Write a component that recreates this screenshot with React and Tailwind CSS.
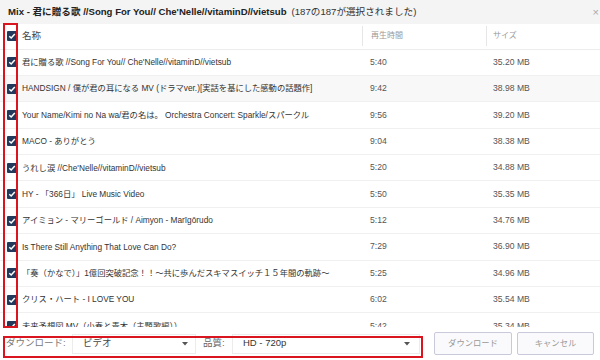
import React from "react";

const rows = [
  ["君に贈る歌 //Song For You// Che'Nelle//vitaminD//vietsub", "5:40", "35.20 MB"],
  ["HANDSIGN / 僕が君の耳になる MV (ドラマver.)[実話を基にした感動の話題作]", "9:42", "38.98 MB"],
  ["Your Name/Kimi no Na wa/君の名は。 Orchestra Concert: Sparkle/スパークル", "9:56", "39.20 MB"],
  ["MACO - ありがとう", "9:04", "38.38 MB"],
  ["うれし涙 //Che'Nelle//vitaminD//vietsub", "5:20", "34.88 MB"],
  ["HY - 「366日」 Live Music Video", "5:50", "35.35 MB"],
  ["アイミョン - マリーゴールド / Aimyon - Marīgōrudo", "5:12", "34.76 MB"],
  ["Is There Still Anything That Love Can Do?", "7:29", "36.90 MB"],
  ["「奏（かなで）」1億回突破記念！！～共に歩んだスキマスイッチ１５年間の軌跡～", "5:25", "34.96 MB"],
  ["クリス・ハート - I LOVE YOU", "6:02", "35.54 MB"],
  ["未来予想図 MV（小春と青木（主題歌編））", "5:42", "35.34 MB"],
];

function Check() {
  return (
    <span className="flex h-[10px] w-[10px] items-center justify-center rounded-[1px] bg-[#22395c]">
      <svg width="8" height="8" viewBox="0 0 8 8">
        <path d="M1.3 4.2 L3.2 6 L6.8 2" fill="none" stroke="#fff" strokeWidth="1.5" />
      </svg>
    </span>
  );
}

function Caret() {
  return (
    <svg width="6" height="4" viewBox="0 0 6 4">
      <path d="M0 0 L6 0 L3 3.5 Z" fill="#555" />
    </svg>
  );
}

export default function App() {
  return (
    <div
      className="relative flex h-[360px] w-[600px] flex-col overflow-hidden bg-white text-[#333]"
      style={{ fontFamily: '"Liberation Sans", "Noto Sans CJK JP", sans-serif' }}
    >
      {/* Title */}
      <div className="flex h-[24px] shrink-0 items-center bg-[#f4f4f4] pl-[8px] text-[9.6px] text-[#222]">
        <span className="font-bold">Mix - 君に贈る歌 //Song For You// Che'Nelle//vitaminD//vietsub</span>
        <span className="ml-[5px] text-[#333]">(187の187が選択されました)</span>
        <span className="ml-auto mr-[1px] text-[11px] text-[#aaa]">×</span>
      </div>

      {/* Table */}
      <div className="flex h-[303px] shrink-0 flex-col overflow-hidden">
        <div className="flex h-[25.5px] shrink-0 items-center border-b border-[#ececec] bg-white">
          <div className="flex w-[22px] shrink-0 pl-[7px]">
            <Check />
          </div>
          <div className="w-[340px] shrink-0 text-[9.5px] text-[#444]">名称</div>
          <div className="flex h-[20px] w-[124px] shrink-0 items-center border-l border-[#e6e6e6] pl-[8px] text-[8px] text-[#999]">
            再生時間
          </div>
          <div className="flex h-[20px] flex-1 items-center border-l border-[#e6e6e6] pl-[6px] text-[8px] text-[#999]">
            サイズ
          </div>
        </div>
        {rows.map((r, i) => (
          <div
            key={i}
            className={
              "flex h-[26.4px] shrink-0 items-center border-b border-[#f0f0f0] " +
              (i === 1 ? "bg-[#f8f8f8]" : "bg-white")
            }
          >
            <div className="flex w-[22px] shrink-0 pl-[7px]">
              <Check />
            </div>
            <div className="w-[340px] shrink-0 overflow-hidden whitespace-nowrap text-[8.3px] text-[#333]">{r[0]}</div>
            <div className="w-[124px] shrink-0 pl-[8px] text-[8.6px] text-[#555]">{r[1]}</div>
            <div className="flex-1 pl-[7px] text-[8.6px] text-[#555]">{r[2]}</div>
          </div>
        ))}
      </div>

      {/* Footer */}
      <div className="flex flex-1 items-center bg-white text-[9.5px]">
        <span className="ml-[6px] w-[66px] text-[#777]">ダウンロード:</span>
        <div className="flex h-[20px] w-[124px] items-center justify-between border border-[#ececec] pl-[10px] pr-[7px] text-[#444]">
          <span>ビデオ</span>
          <Caret />
        </div>
        <span className="ml-[7px] w-[29px] text-[#666]">品質:</span>
        <div className="flex h-[20px] w-[188px] items-center justify-between border border-[#ececec] pl-[10px] pr-[9px] text-[#333]">
          <span>HD - 720p</span>
          <Caret />
        </div>
        <button className="ml-[14px] h-[23px] w-[78px] rounded-[2px] border border-[#c9c9dc] bg-[#fafafc] text-[8.3px] text-[#999]">
          ダウンロード
        </button>
        <button className="ml-[5px] h-[23px] w-[77px] rounded-[2px] border border-[#c9c9dc] bg-[#fafafc] text-[8.3px] text-[#999]">
          キャンセル
        </button>
      </div>

      {/* Red annotation boxes */}
      <div className="pointer-events-none absolute left-[3px] top-[23px] h-[305px] w-[15px] border-2 border-[#d9161f]" />
      <div className="pointer-events-none absolute left-[3px] top-[336px] h-[22px] w-[420px] border-2 border-[#d9161f]" />
    </div>
  );
}
